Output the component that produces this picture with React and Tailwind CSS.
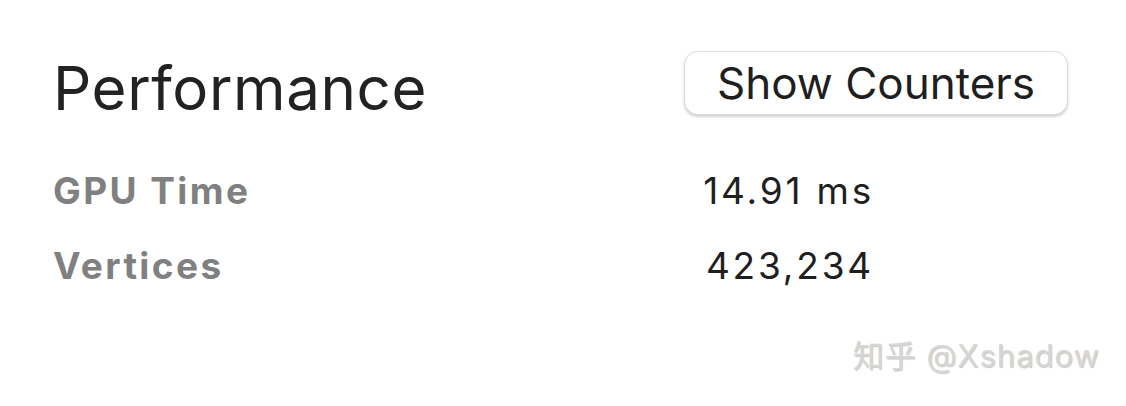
import React from 'react'

const stats = [
  { label: 'GPU Time', value: '14.91 ms' },
  { label: 'Vertices', value: '423,234' },
]

export default function App() {
  return (
    <div
      className="relative w-[1126px] h-[406px] bg-white overflow-hidden"
      style={{ fontFamily: 'Inter, "Noto Sans CJK SC", sans-serif' }}
    >
      <div className="pl-[53px] pt-[51px]">
        {/* Header */}
        <div className="flex items-start">
          <h1 className="w-[631px] text-[60px] leading-[74px] text-[#222222] tracking-[0.6px]">
            Performance
          </h1>
          <button className="w-[384px] h-[64px] rounded-[14px] bg-white border border-[#dcdcdc] shadow-[0_2px_3px_rgba(0,0,0,0.18)] text-[44px] text-[#1f1f1f] leading-none">
            Show Counters
          </button>
        </div>

        {/* Stats */}
        <div className="mt-[42px] flex flex-col gap-[27px]">
          {stats.map(s => (
            <div key={s.label} className="flex items-baseline leading-[48px]">
              <span className="w-[619px] text-[37px] font-bold text-[#808080] tracking-[2.4px]">{s.label}</span>
              <span className="w-[202px] text-right text-[37px] text-[#1f1f1f] tracking-[2.8px]">{s.value}</span>
            </div>
          ))}
        </div>
      </div>

      {/* Watermark */}
      <div className="absolute right-[26px] bottom-[30px] text-[31px] leading-[40px] tracking-[1px] text-[#d6d6d6] [text-shadow:1px_1px_1px_rgba(0,0,0,0.22)]">
        知乎 @Xshadow
      </div>
    </div>
  )
}
